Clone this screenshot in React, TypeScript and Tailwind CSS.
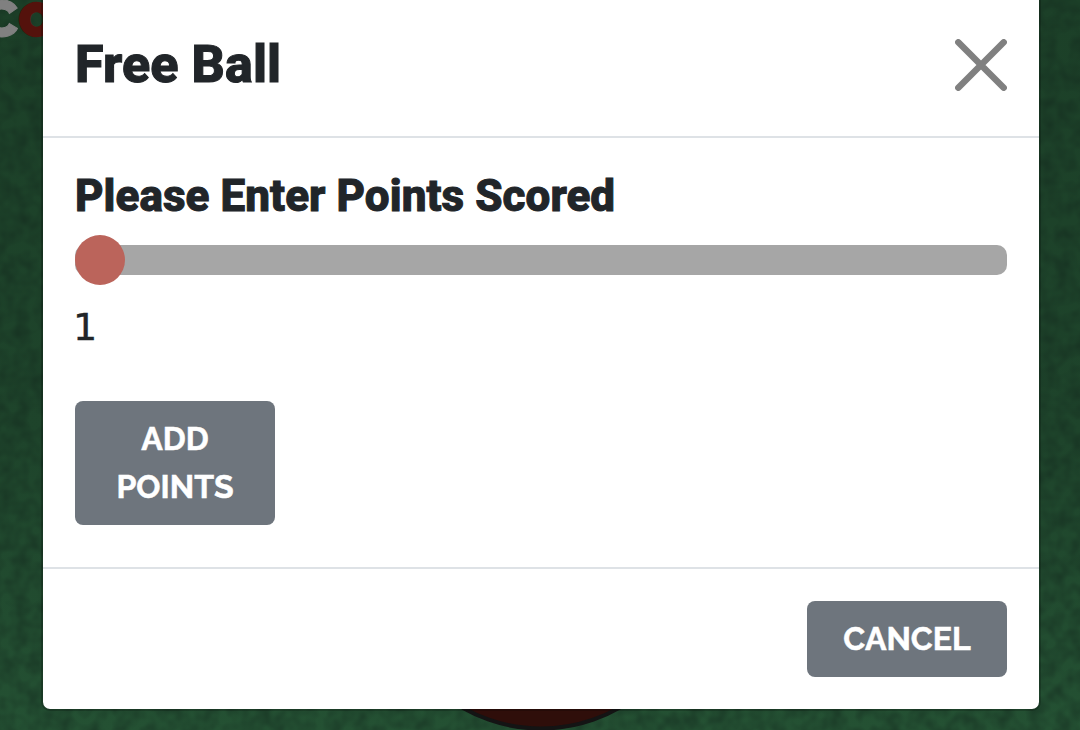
import { useState } from "react";

function Backdrop() {
  return (
    <svg className="absolute inset-0" width="1080" height="730" viewBox="0 0 1080 730" aria-hidden="true">
      <defs>
        <linearGradient id="felt" x1="0" y1="0" x2="0" y2="1">
          <stop offset="0" stopColor="#1c4028" />
          <stop offset="0.6" stopColor="#1e442b" />
          <stop offset="1" stopColor="#245133" />
        </linearGradient>
        <filter id="grain" x="0" y="0" width="100%" height="100%" colorInterpolationFilters="sRGB">
          <feTurbulence type="fractalNoise" baseFrequency="0.07" numOctaves="2" seed="4" />
          <feColorMatrix values="0 0 0 0 0.07  0 0 0 0 0.15  0 0 0 0 0.11  0.9 0 0 0 -0.29" />
        </filter>
      </defs>
      <rect width="1080" height="730" fill="url(#felt)" />
      <rect width="1080" height="730" filter="url(#grain)" />
      <g fontFamily="Raleway, Inter, sans-serif" fontWeight="900">
        <text x="-18" y="37" fontSize="52" fill="#808080" stroke="#808080" strokeWidth="1">C</text>
        <text x="19" y="35.500" fontSize="46" fill="#54120c" stroke="#54120c" strokeWidth="2.500">O</text>
      </g>
      <ellipse cx="541" cy="603" rx="142" ry="125.500" fill="#2f0e0a" stroke="#141414" strokeWidth="4" />
    </svg>
  );
}

function Button({ children, onClick }: { children: React.ReactNode; onClick?: () => void }) {
  return (
    <button
      type="button"
      onClick={onClick}
      className="w-[200px] rounded-[8px] bg-[#6e757d] px-6 py-[14px] text-center font-[Raleway,Lato,sans-serif] text-[32px] leading-[48px] font-bold text-white uppercase [-webkit-text-stroke:0.5px_white]"
    >
      {children}
    </button>
  );
}

export default function App() {
  const [points, setPoints] = useState(1);
  return (
    <main className="relative h-[730px] w-[1080px] overflow-hidden bg-[#1d4129] font-[Roboto,sans-serif] text-[#212529]">
      <Backdrop />
      <section role="dialog" className="relative ml-[41px] h-[711px] w-[1000px] rounded-b-[9px] border-2 border-t-0 border-black/20 bg-white bg-clip-padding">
        <header className="flex h-[138px] items-center justify-between border-b-2 border-[#dee2e6] px-8 pb-[6px]">
          <h1 className="text-[52px] leading-[60px] font-extrabold tracking-[0.1px] [-webkit-text-stroke:1px_#212529]">Free Ball</h1>
          <button type="button" aria-label="Close">
            <svg className="block" width="52" height="52" viewBox="0 0 52 52" fill="none" stroke="#808080" strokeWidth="6.500" strokeLinecap="round">
              <path d="M3.300 3.300 48.700 48.700M48.700 3.300 3.300 48.700" />
            </svg>
          </button>
        </header>
        <div className="flex h-[429px] flex-col items-start px-8 pt-8">
          <h2 className="text-[44px] leading-[52px] font-extrabold tracking-[0.06px] [-webkit-text-stroke:1px_#212529]">Please Enter Points Scored</h2>
          <input
            type="range"
            min={1}
            max={50}
            value={points}
            onChange={(e) => setPoints(Number(e.target.value))}
            className="mt-[23px] h-[30px] w-full appearance-none rounded-[10px] bg-[#a6a6a6] [&::-webkit-slider-thumb]:size-[50px] [&::-webkit-slider-thumb]:appearance-none [&::-webkit-slider-thumb]:rounded-full [&::-webkit-slider-thumb]:bg-[#bb645b]"
          />
          <output className="mt-[29px] -ml-[2px] font-['DejaVu_Sans',sans-serif] text-[38px] leading-[46px] [-webkit-text-stroke:0.4px_#212529]">{points}</output>
          <div className="mt-[51px]">
            <Button>Add Points</Button>
          </div>
        </div>
        <footer className="flex h-[142px] items-start justify-end border-t-2 border-[#dee2e6] px-8 pt-8">
          <Button>Cancel</Button>
        </footer>
      </section>
    </main>
  );
}
